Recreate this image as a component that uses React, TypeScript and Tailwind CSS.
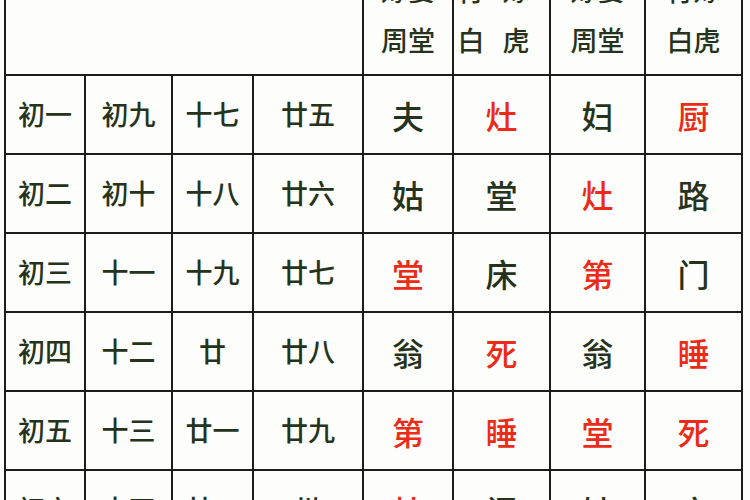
import { Fragment } from 'react'

const rows: { left: string[]; right: [string, boolean][] }[] = [
  { left: ['初一', '初九', '十七', '廿五'], right: [['夫', false], ['灶', true], ['妇', false], ['厨', true]] },
  { left: ['初二', '初十', '十八', '廿六'], right: [['姑', false], ['堂', false], ['灶', true], ['路', false]] },
  { left: ['初三', '十一', '十九', '廿七'], right: [['堂', true], ['床', false], ['第', true], ['门', false]] },
  { left: ['初四', '十二', '廿', '廿八'], right: [['翁', false], ['死', true], ['翁', false], ['睡', true]] },
  { left: ['初五', '十三', '廿一', '廿九'], right: [['第', true], ['睡', true], ['堂', true], ['死', true]] },
  { left: ['初六', '十四', '廿二', '卅'], right: [['灶', true], ['门', false], ['姑', false], ['床', false]] },
]

const heads: [string, string, boolean][] = [
  ['嫁娶', '周堂', false],
  ['行嫁', '白虎', true],
  ['嫁娶', '周堂', false],
  ['行嫁', '白虎', false],
]

export default function App() {
  return (
    <div
      className="w-[750px] h-[500px] overflow-hidden bg-[#fdfdfb]"
      style={{ fontFamily: '"Noto Sans CJK SC", "Noto Sans", sans-serif' }}
    >
      <div className="ml-[4px] mt-[-46px] inline-grid grid-cols-[78px_85px_79px_108px_88px_95px_93px_95px] auto-rows-[77px] grid-rows-[118px] gap-[2px] border-2 border-[#1c1c1c] bg-[#1c1c1c] text-[#26331c] font-medium">
        {/* header */}
        <div className="col-span-4 bg-[#fdfdfb]" />
        {heads.map(([a, b, spaced], i) => (
          <div key={i} className="flex flex-col items-center justify-center bg-[#fdfdfb] text-[27px] leading-[50px]">
            <span className={spaced ? 'flex gap-[18px] pr-[16px]' : 'flex'}>
              <span>{a[0]}</span>
              <span>{a[1]}</span>
            </span>
            <span className={spaced ? 'flex gap-[18px] pr-[16px]' : 'flex'}>
              <span>{b[0]}</span>
              <span>{b[1]}</span>
            </span>
          </div>
        ))}

        {/* body */}
        {rows.map((r, ri) => (
          <Fragment key={ri}>
            {r.left.map((t, i) => (
              <div key={'l' + i} className="flex items-center justify-center bg-[#fdfdfb] text-[27px]">
                {t}
              </div>
            ))}
            {r.right.map(([t, red], i) => (
              <div
                key={'r' + i}
                className={
                  'flex items-center justify-center bg-[#fdfdfb] text-[32px] ' +
                  (red ? 'text-[#ec2a18]' : 'text-[#26331c]')
                }
              >
                {t}
              </div>
            ))}
          </Fragment>
        ))}
      </div>
    </div>
  )
}
